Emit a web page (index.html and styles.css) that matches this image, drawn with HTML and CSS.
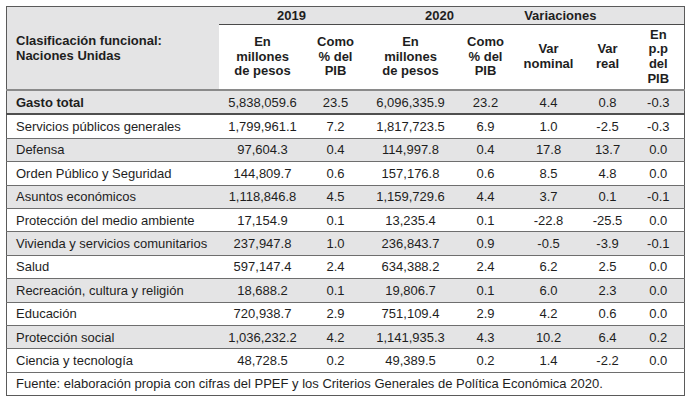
FILE: index.html
```html
<!DOCTYPE html>
<html lang="es">
<head>
<meta charset="utf-8">
<title>Gasto por clasificación funcional</title>
<link rel="stylesheet" href="styles.css">
</head>
<body>
<table class="tbl">
  <colgroup>
    <col class="c1"><col class="c2"><col class="c3"><col class="c4"><col class="c5"><col class="c6"><col class="c7"><col class="c8">
  </colgroup>
  <thead>
    <tr class="h-top">
      <th rowspan="2" class="h-label">Clasificación funcional:<br>Naciones Unidas</th>
      <th colspan="2" class="h-year">2019</th>
      <th colspan="2" class="h-year">2020</th>
      <th colspan="3" class="h-year h-var">Variaciones</th>
    </tr>
    <tr class="h-sub">
      <th>En<br>millones<br>de pesos</th>
      <th>Como<br>% del<br>PIB</th>
      <th>En<br>millones<br>de pesos</th>
      <th>Como<br>% del<br>PIB</th>
      <th class="nom">Var<br>nominal</th>
      <th>Var<br>real</th>
      <th>En<br>p.p<br>del<br>PIB</th>
    </tr>
  </thead>
  <tbody>
    <tr class="grey total"><td class="lbl">Gasto total</td><td>5,838,059.6</td><td>23.5</td><td>6,096,335.9</td><td>23.2</td><td class="nom">4.4</td><td>0.8</td><td>-0.3</td></tr>
    <tr><td class="lbl">Servicios públicos generales</td><td>1,799,961.1</td><td>7.2</td><td>1,817,723.5</td><td>6.9</td><td class="nom">1.0</td><td>-2.5</td><td>-0.3</td></tr>
    <tr class="grey"><td class="lbl">Defensa</td><td>97,604.3</td><td>0.4</td><td>114,997.8</td><td>0.4</td><td class="nom">17.8</td><td>13.7</td><td>0.0</td></tr>
    <tr><td class="lbl">Orden Público y Seguridad</td><td>144,809.7</td><td>0.6</td><td>157,176.8</td><td>0.6</td><td class="nom">8.5</td><td>4.8</td><td>0.0</td></tr>
    <tr class="grey"><td class="lbl">Asuntos económicos</td><td>1,118,846.8</td><td>4.5</td><td>1,159,729.6</td><td>4.4</td><td class="nom">3.7</td><td>0.1</td><td>-0.1</td></tr>
    <tr><td class="lbl">Protección del medio ambiente</td><td>17,154.9</td><td>0.1</td><td>13,235.4</td><td>0.1</td><td class="nom">-22.8</td><td>-25.5</td><td>0.0</td></tr>
    <tr class="grey"><td class="lbl">Vivienda y servicios comunitarios</td><td>237,947.8</td><td>1.0</td><td>236,843.7</td><td>0.9</td><td class="nom">-0.5</td><td>-3.9</td><td>-0.1</td></tr>
    <tr><td class="lbl">Salud</td><td>597,147.4</td><td>2.4</td><td>634,388.2</td><td>2.4</td><td class="nom">6.2</td><td>2.5</td><td>0.0</td></tr>
    <tr class="grey"><td class="lbl">Recreación, cultura y religión</td><td>18,688.2</td><td>0.1</td><td>19,806.7</td><td>0.1</td><td class="nom">6.0</td><td>2.3</td><td>0.0</td></tr>
    <tr><td class="lbl">Educación</td><td>720,938.7</td><td>2.9</td><td>751,109.4</td><td>2.9</td><td class="nom">4.2</td><td>0.6</td><td>0.0</td></tr>
    <tr class="grey"><td class="lbl">Protección social</td><td>1,036,232.2</td><td>4.2</td><td>1,141,935.3</td><td>4.3</td><td class="nom">10.2</td><td>6.4</td><td>0.2</td></tr>
    <tr><td class="lbl">Ciencia y tecnología</td><td>48,728.5</td><td>0.2</td><td>49,389.5</td><td>0.2</td><td class="nom">1.4</td><td>-2.2</td><td>0.0</td></tr>
  </tbody>
  <tfoot>
    <tr><td colspan="8" class="lbl src">Fuente: elaboración propia con cifras del PPEF y los Criterios Generales de Política Económica 2020.</td></tr>
  </tfoot>
</table>
</body>
</html>
```

FILE: styles.css
```css
html, body {
  margin: 0;
  padding: 0;
  background: #ffffff;
}

body {
  padding: 6px;
  font-family: "Liberation Sans", Arial, sans-serif;
  color: #1e1e1e;
}

.tbl {
  border-collapse: collapse;
  table-layout: fixed;
  width: 678px;
  border: 1px solid #5a5a5a;
  font-size: 13px;
}

.c1 { width: 212px; }
.c2 { width: 88px; }
.c3 { width: 58px; }
.c4 { width: 92px; }
.c5 { width: 58px; }
.c6 { width: 68px; }
.c7 { width: 50px; }
.c8 { width: 52px; }

th, td {
  padding: 0;
  text-align: center;
  vertical-align: middle;
}

.h-top th {
  background: #e4e4e5;
  font-weight: bold;
}

.h-year {
  height: 17px;
  line-height: 15px;
  border-bottom: 1px solid #4a4a4a;
}

.h-var {
  padding-right: 78px;
}

.h-label {
  text-align: left;
  padding-left: 9px;
  line-height: 15px;
  border-bottom: 2px solid #8a8a8a;
}

.h-sub th {
  background: #ffffff;
  height: 64px;
  line-height: 14.6px;
  font-weight: bold;
  border-bottom: 2px solid #8a8a8a;
}

tbody td, tfoot td {
  height: 22.4px;
  line-height: 15px;
  border-bottom: 1px solid #6e6e6e;
}

.grey td {
  background: #e4e4e5;
}

.total td {
  border-bottom: 2px solid #4f4f4f;
}

.total .lbl {
  font-weight: bold;
}

.lbl {
  text-align: left;
  padding-left: 9px;
  white-space: nowrap;
}

.nom {
  padding-left: 0;
}

.src {
  border-bottom: 1px solid #5a5a5a;
}
```
